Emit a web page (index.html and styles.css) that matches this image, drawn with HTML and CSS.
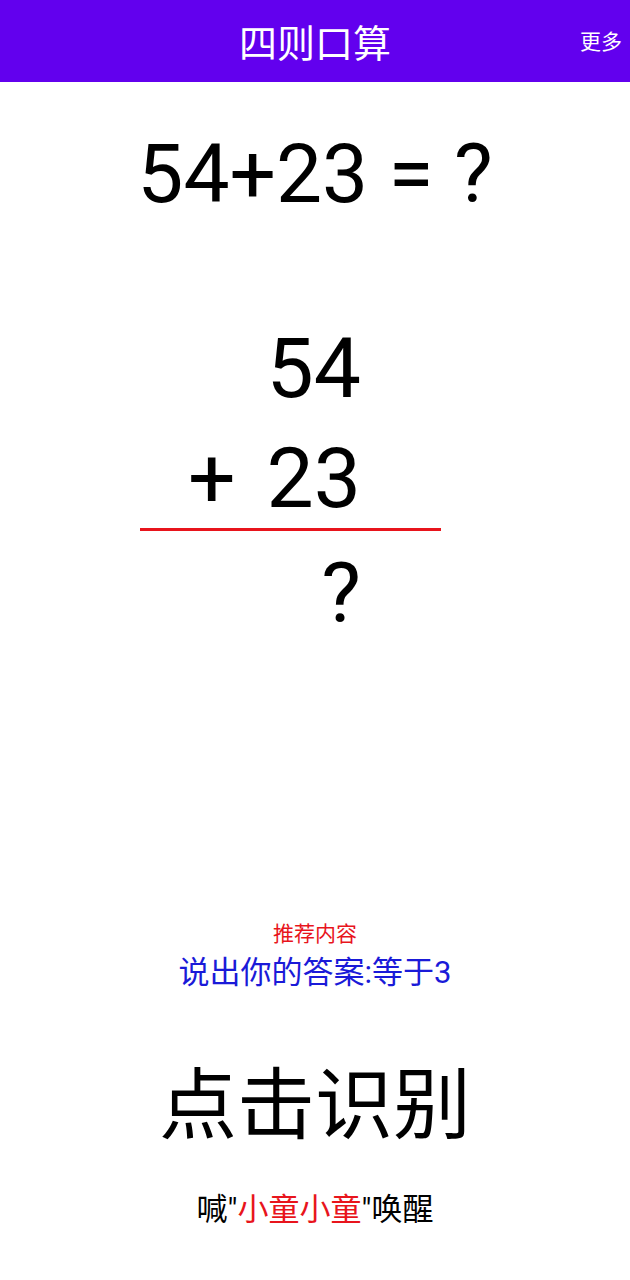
FILE: index.html
```html
<!DOCTYPE html>
<html lang="zh-CN">
<head>
<meta charset="utf-8">
<title>四则口算</title>
<link rel="stylesheet" href="styles.css">
</head>
<body>
<header class="appbar">
  <h1 class="appbar-title">四则口算</h1>
  <span class="appbar-more">更多</span>
</header>
<main class="content">
  <div class="equation">54+23 = ?</div>
  <div class="vertical">
    <div class="v-row">54</div>
    <div class="v-row v-row-op"><span class="op">+</span><span class="num">23</span></div>
    <div class="v-line"></div>
    <div class="v-row v-row-ans">?</div>
  </div>
  <div class="recommend">推荐内容</div>
  <div class="hint">说出你的答案:等于3</div>
  <div class="recognize">点击识别</div>
  <div class="wake">喊"<span class="wake-name">小童小童</span>"唤醒</div>
</main>
</body>
</html>
```

FILE: styles.css
```css
html, body {
  margin: 0;
  padding: 0;
  background: #ffffff;
}
body {
  width: 630px;
  font-family: Roboto, "Noto Sans CJK SC", sans-serif;
  color: #000000;
}
.appbar {
  height: 82px;
  background: #6200ee;
  display: flex;
  align-items: center;
  justify-content: center;
  position: relative;
}
.appbar-title {
  margin: 0;
  font-family: "Noto Sans CJK SC", sans-serif;
  font-weight: 400;
  font-size: 38px;
  line-height: 38px;
  color: #ffffff;
}
.appbar-more {
  position: absolute;
  right: 8px;
  top: 30px;
  font-family: "Noto Sans CJK SC", sans-serif;
  font-size: 21px;
  line-height: 21px;
  color: #ffffff;
}
.content {
  display: flex;
  flex-direction: column;
  align-items: center;
}
.equation {
  margin-top: 50px;
  font-size: 82px;
  line-height: 84px;
  height: 84px;
  white-space: pre;
}
.vertical {
  align-self: flex-start;
  margin-left: 140px;
  margin-top: 103px;
  width: 301px;
  display: flex;
  flex-direction: column;
}
.v-row {
  font-size: 84px;
  line-height: 100px;
  height: 100px;
  text-align: right;
  padding-right: 80px;
}
.v-row-op {
  margin-top: 10px;
  display: flex;
  justify-content: space-between;
  padding-left: 48px;
}
.v-line {
  margin-top: -1px;
  height: 3px;
  background: #e8141c;
}
.v-row-ans {
  margin-top: 13px;
}
.recommend {
  margin-top: 278px;
  font-family: "Noto Sans CJK SC", sans-serif;
  font-size: 21px;
  line-height: 21px;
  color: #e8141c;
}
.hint {
  margin-top: 14px;
  font-size: 31px;
  line-height: 31px;
  color: #1a1ad8;
}
.recognize {
  margin-top: 72px;
  font-family: "Noto Sans CJK SC", sans-serif;
  font-size: 78px;
  line-height: 78px;
}
.wake {
  margin-top: 56px;
  font-size: 31px;
  line-height: 31px;
}
.wake-name {
  color: #e8141c;
}
```
